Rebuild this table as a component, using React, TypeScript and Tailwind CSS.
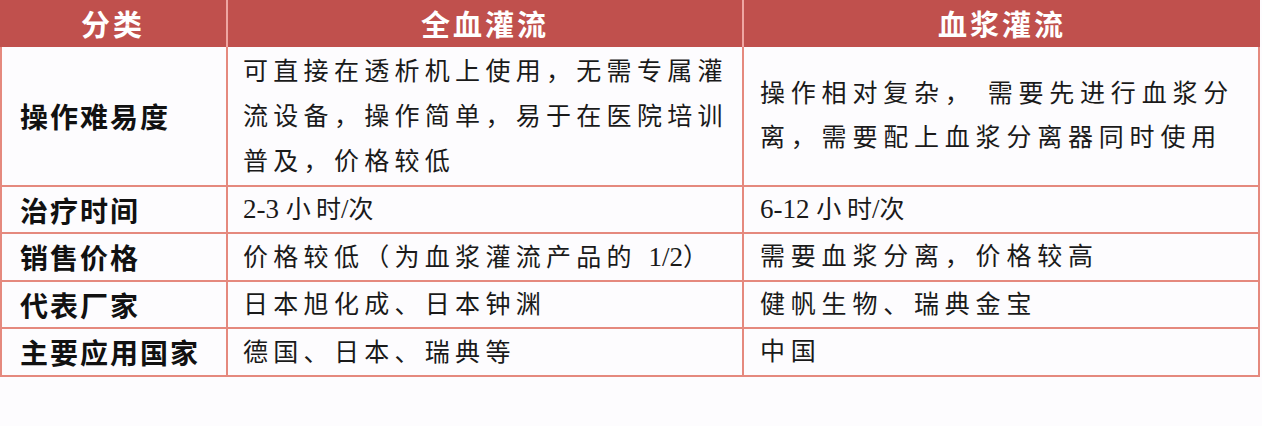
import type { ReactNode } from "react";

// Latin runs (digits, slash) sit in a plain serif without the CJK letter spacing
function L({ children }: { children: ReactNode }) {
  return <span className="tracking-normal text-[27px]">{children}</span>;
}

const perTime = (n: string) => (
  <>
    <L>{n} </L>小<span className="tracking-normal">时</span>
    <L>/</L>次
  </>
);

const rows: { label: string; whole: ReactNode[]; plasma: ReactNode[]; h: string }[] = [
  {
    label: "操作难易度",
    whole: ["可直接在透析机上使用，无需专属灌", "流设备，操作简单，易于在医院培训", "普及，价格较低"],
    plasma: ["操作相对复杂， 需要先进行血浆分", "离，需要配上血浆分离器同时使用"],
    h: "h-[140px]",
  },
  { label: "治疗时间", whole: [perTime("2-3")], plasma: [perTime("6-12")], h: "h-[47px]" },
  {
    label: "销售价格",
    whole: [<>价格较低（为血浆灌流产品的 <L>1/2</L>）</>],
    plasma: ["需要血浆分离，价格较高"],
    h: "h-[48px]",
  },
  { label: "代表厂家", whole: ["日本旭化成、日本钟渊"], plasma: ["健帆生物、瑞典金宝"], h: "h-[47px]" },
  { label: "主要应用国家", whole: ["德国、日本、瑞典等"], plasma: ["中国"], h: "h-[48px]" },
];

const body = "font-['Liberation_Serif','Noto_Sans_CJK_SC',serif] text-[25px] text-[#1a1a1a]";

export default function App() {
  return (
    <div className="w-[1262px] h-[426px] bg-[#fdfcfe] overflow-hidden">
      <div className="w-[1260px]">
        {/* header */}
        <div className="grid grid-cols-[228px_516px_516px] h-[47px] bg-[#c0504d] text-white font-bold text-[29px] tracking-[3px] font-['Noto_Sans_CJK_SC',sans-serif]">
          <div className="flex items-center justify-center border-r-2 border-[#eea6a2]">分类</div>
          <div className="flex items-center justify-center border-r-2 border-[#eea6a2]">全血灌流</div>
          <div className="flex items-center justify-center">血浆灌流</div>
        </div>

        {rows.map((r, i) => (
          <div key={i} className={`grid grid-cols-[228px_516px_516px] ${r.h}`}>
            <div className="flex items-center pl-[18px] border-l-2 border-r-2 border-b-2 border-[#e5897e] font-bold text-[28px] tracking-[2px] text-[#111] font-['Noto_Sans_CJK_SC',sans-serif]">
              {r.label}
            </div>
            <div className={`flex flex-col justify-center pl-[15px] border-r-2 border-b-2 border-[#e5897e] tracking-[5.3px] ${body}`}>
              {r.whole.map((l, j) => (
                <div key={j} className="leading-[45px] whitespace-nowrap">{l}</div>
              ))}
            </div>
            <div className={`flex flex-col justify-center pl-[16px] border-r-2 border-b-2 border-[#e5897e] tracking-[5.8px] ${body}`}>
              {r.plasma.map((l, j) => (
                <div key={j} className="leading-[44px] whitespace-nowrap">{l}</div>
              ))}
            </div>
          </div>
        ))}
      </div>
    </div>
  );
}
